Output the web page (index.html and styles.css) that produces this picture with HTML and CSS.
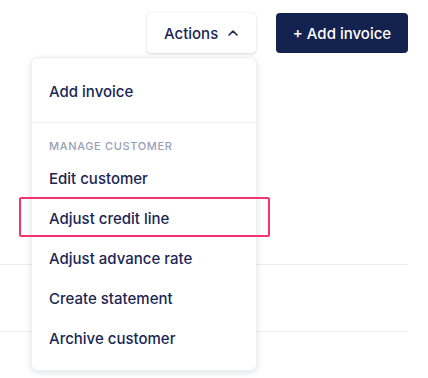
FILE: index.html
```html
<!DOCTYPE html>
<html lang="en">
<head>
    <meta charset="UTF-8">
    <meta name="viewport" content="width=device-width, initial-scale=1.0">
    <title>Customer actions</title>
    <link rel="stylesheet" href="styles.css">
</head>
<body>
    <div class="page">
        <div class="toolbar">
            <div class="actions">
                <button class="actions-button">
                    Actions
                    <svg class="chevron" width="10" height="6" viewBox="0 0 10 6" fill="none">
                        <path d="M1 5L5 1.2L9 5" stroke="#1b2653" stroke-width="1.6" stroke-linecap="round" stroke-linejoin="round"/>
                    </svg>
                </button>

                <div class="menu">
                    <div class="menu-group">
                        <a class="menu-item">Add invoice</a>
                    </div>
                    <div class="menu-group">
                        <div class="menu-heading">Manage customer</div>
                        <a class="menu-item">Edit customer</a>
                        <a class="menu-item highlighted">Adjust credit line</a>
                        <a class="menu-item">Adjust advance rate</a>
                        <a class="menu-item">Create statement</a>
                        <a class="menu-item">Archive customer</a>
                    </div>
                </div>
            </div>
            <button class="primary-button">+ Add invoice</button>
        </div>

        <div class="rows">
            <div class="row"></div>
            <div class="row"></div>
        </div>
    </div>
</body>
</html>
```

FILE: styles.css
```css
* {
    margin: 0;
    padding: 0;
    box-sizing: border-box;
}

body {
    font-family: Inter, "Noto Sans", sans-serif;
    background: #ffffff;
    color: #1b2653;
    width: 428px;
    height: 378px;
    overflow: hidden;
}

.page {
    padding: 13px 20px 0 0;
}

.toolbar {
    display: flex;
    justify-content: flex-end;
    gap: 20px;
}

.actions {
    position: relative;
}

.actions-button {
    display: flex;
    align-items: center;
    gap: 10px;
    width: 109px;
    height: 40px;
    padding-left: 17px;
    border: none;
    border-radius: 4px;
    background: #ffffff;
    box-shadow: 0 1px 3px rgba(20, 30, 60, 0.16), 0 0 1px rgba(20, 30, 60, 0.12);
    font-family: inherit;
    font-size: 15px;
    font-weight: 500;
    color: #1b2653;
}

.chevron {
    margin-top: -1px;
}

.primary-button {
    width: 132px;
    height: 40px;
    border: none;
    border-radius: 4px;
    background: #13224f;
    color: #ffffff;
    font-family: inherit;
    font-size: 15px;
    font-weight: 500;
}

/* dropdown lies over the page rows */
.menu {
    position: absolute;
    top: 44px;
    right: -1px;
    width: 226px;
    padding: 14px 0 11px;
    background: #ffffff;
    border-radius: 6px;
    border: 1px solid #eceef2;
    box-shadow: 0 2px 6px rgba(20, 30, 60, 0.12);
    z-index: 2;
}

.menu-group:first-child {
    padding-bottom: 10px;
    border-bottom: 1px solid #f0f1f4;
}

.menu-group + .menu-group {
    padding-top: 15px;
}

.menu-heading {
    padding-left: 17px;
    margin-bottom: 5px;
    font-size: 11px;
    line-height: 16px;
    font-weight: 500;
    letter-spacing: 0.06em;
    text-transform: uppercase;
    color: #97a0b5;
}

.menu-item {
    display: block;
    position: relative;
    height: 40px;
    line-height: 40px;
    padding-left: 17px;
    font-size: 15px;
    font-weight: 500;
    color: #1b2653;
}

.menu-item.highlighted::after {
    content: "";
    position: absolute;
    top: -2px;
    bottom: 2px;
    left: -13px;
    right: -14px;
    border: 2px solid #f5336f;
    border-radius: 2px;
}

.rows {
    margin-top: 211px;
}

.row {
    height: 67px;
    border-top: 1px solid #e9ebef;
}

.row:last-child {
    height: 45px;
}
```
